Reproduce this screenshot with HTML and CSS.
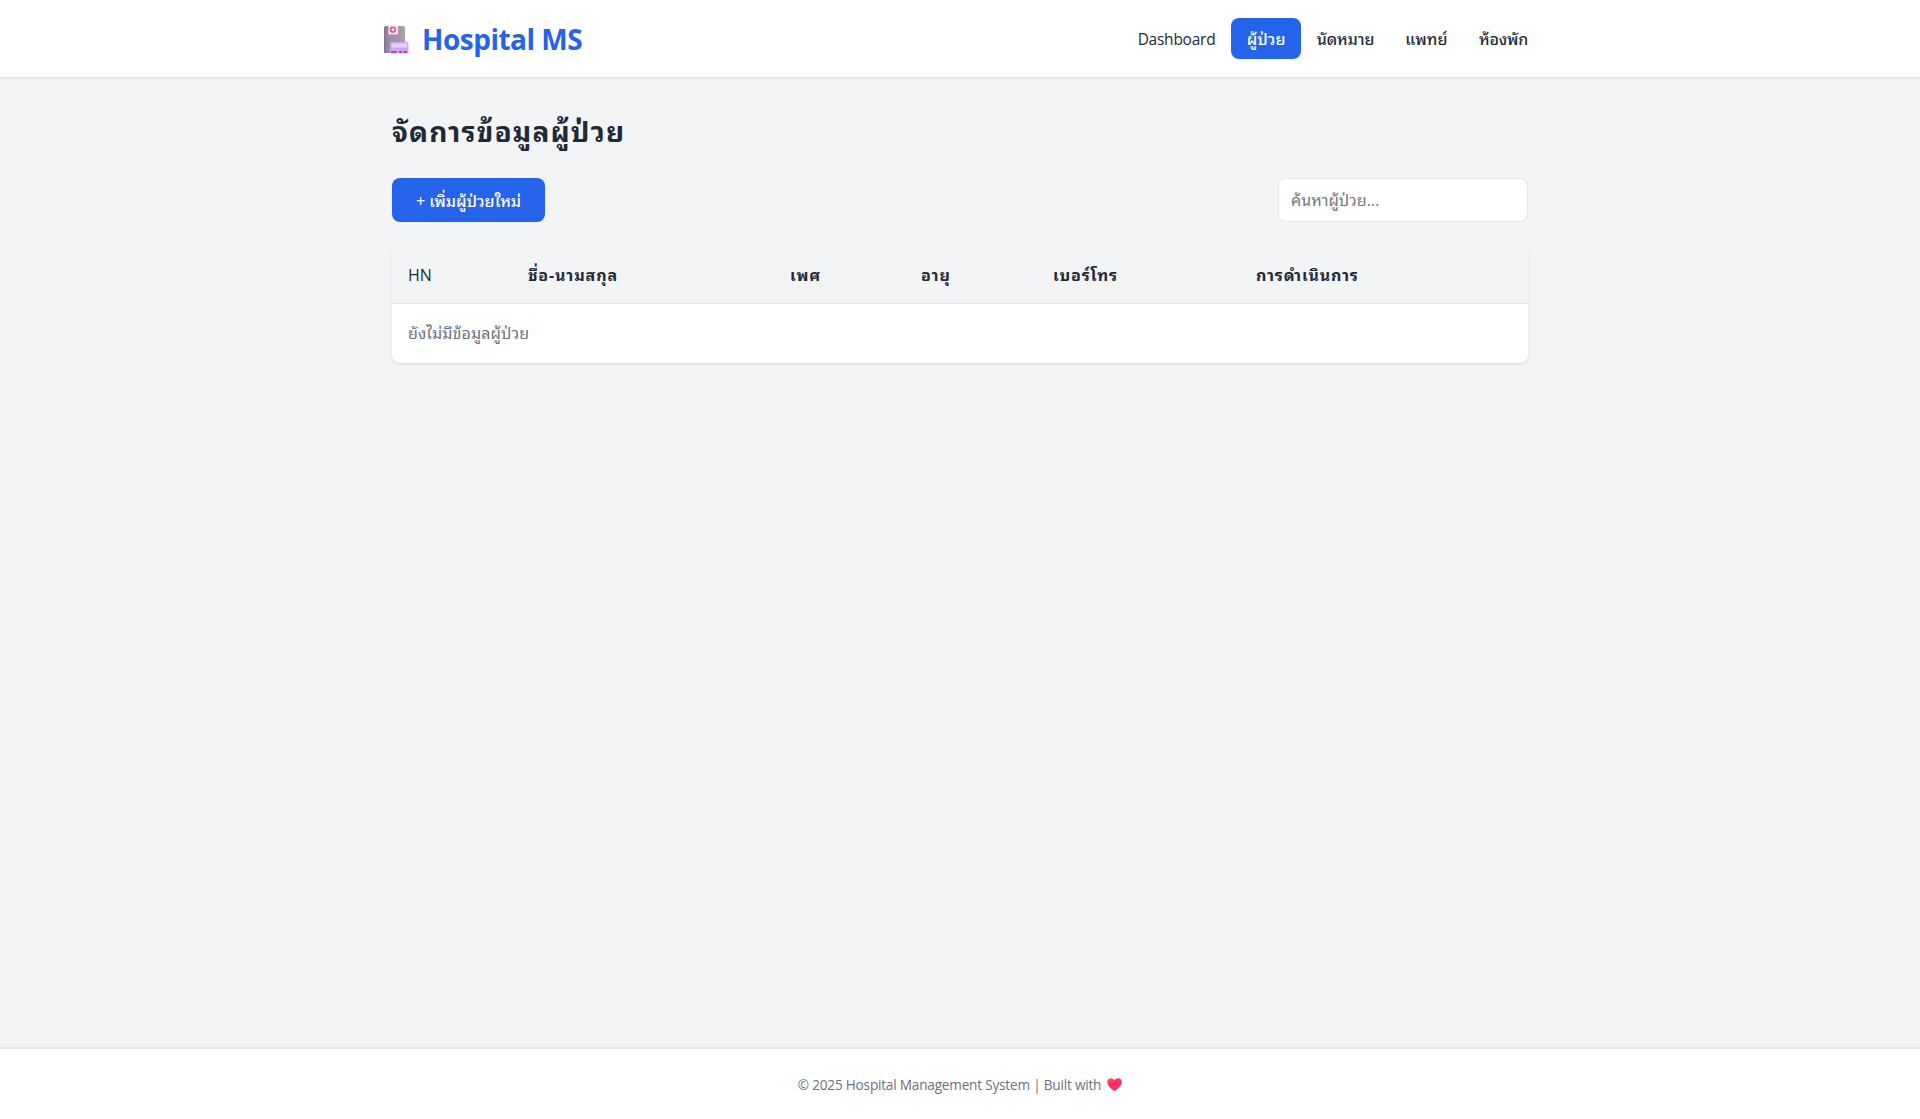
FILE: index.html
```html
<!DOCTYPE html>
<html lang="th">
<head>
<meta charset="utf-8">
<title>Hospital MS</title>
<link rel="stylesheet" href="styles.css">
</head>
<body>
<header class="site-header">
  <div class="header-inner">
    <div class="logo">
      <svg class="logo-icon" width="25" height="28" viewBox="0 0 25 28">
        <defs><linearGradient id="tower" x1="0" x2="1"><stop offset="0" stop-color="#83728c"/><stop offset=".2" stop-color="#9b8ba2"/><stop offset="1" stop-color="#aaa0ad"/></linearGradient></defs>
        <path d="M0 2.500Q0 1 2 1H19Q21 1 21 3V28H0Z" fill="url(#tower)"/>
        <rect x="4.500" width="9.500" height="9.500" rx="1" fill="#f3e5f5"/>
        <path d="M9 1.500L12.200 4.700L9 7.900L5.800 4.700Z" fill="none" stroke="#ee3f88" stroke-width="1.700" stroke-dasharray="3.500 1" stroke-dashoffset="-.5"/>
        <path d="M6 18.500l1-1.500H23.500l1 1.500V28H6z" fill="#cda7ee"/>
        <path d="M7.500 18.500h15.500v4H7.500z" fill="#e5d0fb"/>
        <path d="M7 26h5.500v2H7zM15 26h3v2h-3zM19.500 26H23v2h-3.500z" fill="#e02bbd"/>
      </svg>
      <span class="logo-text">Hospital MS</span>
    </div>
    <nav class="nav">
      <a class="nav-link nav-dashboard">Dashboard</a>
      <a class="nav-link nav-patients active">ผู้ป่วย</a>
      <a class="nav-link nav-appointments">นัดหมาย</a>
      <a class="nav-link nav-doctors">แพทย์</a>
      <a class="nav-link nav-rooms">ห้องพัก</a>
    </nav>
  </div>
</header>
<main class="main">
  <h1 class="title">จัดการข้อมูลผู้ป่วย</h1>
  <div class="toolbar">
    <button class="add-button">+ เพิ่มผู้ป่วยใหม่</button>
    <input class="search" type="text" placeholder="ค้นหาผู้ป่วย...">
  </div>
  <div class="table">
    <div class="row head">
      <span>HN</span><span>ชื่อ-นามสกุล</span><span>เพศ</span><span>อายุ</span><span>เบอร์โทร</span><span>การดำเนินการ</span>
    </div>
    <div class="empty">ยังไม่มีข้อมูลผู้ป่วย</div>
  </div>
</main>
<footer class="footer">
  <span class="footer-text">© 2025 Hospital Management System | Built with</span>
  <svg width="15" height="13" viewBox="0 0 15 13">
    <defs><linearGradient id="heart" x1="0" y1="0" x2=".6" y2="1"><stop offset="0" stop-color="#ff5a58"/><stop offset=".5" stop-color="#f52f5c"/><stop offset="1" stop-color="#f92c91"/></linearGradient></defs>
    <path d="M7.500 13C5.500 12 .3 8.200.3 4.200.3 1.700 1.900.2 4 .2c1.500 0 2.800.8 3.500 2C8.200 1 9.500.2 11 .2c2.100 0 3.700 1.500 3.700 4C14.700 8.200 9.500 12 7.500 13z" fill="url(#heart)"/>
  </svg>
</footer>
</body>
</html>
```
FILE: styles.css
```css
* { box-sizing: border-box; }
body {
  margin: 0;
  min-height: 100vh;
  display: flex;
  flex-direction: column;
  background: #f3f4f6;
  color: #1f2937;
  font: 16px/1.6 "Open Sans", "Noto Sans Thai Looped", Loma, "Noto Sans Thai", "Noto Sans", sans-serif;
}
.site-header {
  height: 77px;
  background: #fff;
  box-shadow: 0 1px 3px rgba(0, 0, 0, .1);
}
.header-inner {
  width: 1200px;
  height: 77px;
  margin: 0 auto;
  padding: 0 16px 0 24px;
  display: flex;
  justify-content: space-between;
  align-items: center;
}
.logo { display: flex; align-items: center; gap: 13px; padding-top: 1px; }
.logo-text { color: #2563eb; font-size: 28px; font-weight: 700; letter-spacing: -.5px; white-space: nowrap; }
.nav { display: flex; }
.nav-link {
  height: 41px;
  line-height: 43px;
  text-align: center;
  border-radius: 8px;
  font-weight: 500;
  white-space: nowrap;
}
.nav-dashboard { width: 109px; font-size: 15.5px; font-weight: 400; letter-spacing: -.25px; }
.nav-patients { width: 70px; }
.nav-appointments { width: 89px; letter-spacing: -.1px; }
.nav-doctors { width: 73px; letter-spacing: .1px; }
.nav-rooms { width: 81px; letter-spacing: -.2px; }
.active { background: #2563eb; color: #fff; }
.main { flex: 1; width: 1136px; margin: 0 auto; padding-top: 32px; }
.title { margin: 0 0 24px; font-size: 28px; font-weight: 700; line-height: 45px; letter-spacing: 1.15px; white-space: nowrap; }
.toolbar { display: flex; justify-content: space-between; margin-bottom: 24px; }
.add-button {
  width: 153px;
  height: 44px;
  padding: 0;
  border: 0;
  border-radius: 8px;
  background: #2563eb;
  color: #fff;
  font-family: inherit;
  font-size: 16px;
  font-weight: 500;
  letter-spacing: -.05px;
  white-space: nowrap;
}
.search {
  width: 250px;
  height: 44px;
  padding: 0 12px;
  border: 1px solid #e5e7eb;
  border-radius: 8px;
  background: #fff;
  font-family: inherit;
  font-size: 16px;
}
.search::placeholder { color: #757575; }
.table {
  height: 117px;
  border-radius: 8px;
  overflow: hidden;
  background: #fff;
  box-shadow: 0 1px 3px rgba(0, 0, 0, .1);
}
.row {
  display: grid;
  grid-template-columns: 120px 262px 131px 132px 203px 1fr;
  padding-left: 16px;
  height: 58px;
  line-height: 59px;
  border-bottom: 1px solid #e5e7eb;
  background: #f3f4f6;
  font-weight: 700;
  letter-spacing: .85px;
  white-space: nowrap;
}
.row span:first-child { font-weight: 500; letter-spacing: 0; }
.empty { padding-left: 16px; line-height: 59px; color: #6b7280; letter-spacing: .1px; white-space: nowrap; }
.footer {
  height: 70px;
  padding-top: 1px;
  display: flex;
  justify-content: center;
  align-items: center;
  gap: 6px;
  background: #fff;
  color: #6b7280;
  box-shadow: 0 -1px 3px rgba(0, 0, 0, .1);
  font-size: 13.6px;
}
.footer-text { letter-spacing: -.2px; white-space: nowrap; }
```
